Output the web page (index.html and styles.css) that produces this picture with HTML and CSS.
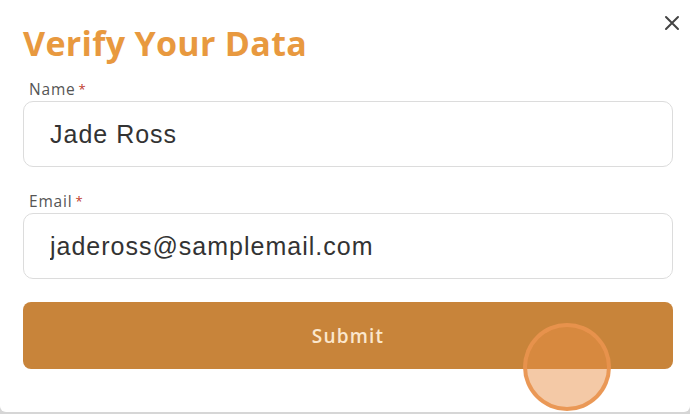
FILE: index.html
```html
<!DOCTYPE html>
<html lang="en">
<head>
  <meta charset="UTF-8" />
  <title>Verify Your Data</title>
  <meta name="viewport" content="width=device-width, initial-scale=1.0" />
  <link rel="stylesheet" href="styles.css">
</head>
<body>
  <div class="modal">
    <div class="modal-header">
      <h1>Verify Your Data</h1>
      <button class="close" aria-label="Close">
        <svg width="16" height="16" viewBox="0 0 16 16">
          <path d="M2 2 L14 14 M14 2 L2 14" stroke="#444" stroke-width="2" stroke-linecap="round" fill="none" />
        </svg>
      </button>
    </div>
    <form class="form">
      <div class="field">
        <label>Name<span class="req">*</span></label>
        <input type="text" value="Jade Ross" />
      </div>
      <div class="field">
        <label>Email<span class="req">*</span></label>
        <input type="text" value="jadeross@samplemail.com" />
      </div>
      <button type="button" class="submit">Submit</button>
    </form>
    <div class="touch"></div>
  </div>
</body>
</html>
```

FILE: styles.css
```css
body {
  margin: 0;
  background: #d6d6d6;
  font-family: 'Open Sans', sans-serif;
}
.modal {
  position: relative;
  box-sizing: border-box;
  width: 690px;
  height: 412px;
  padding: 23px 17px 0 23px;
  background: #fff;
  border-radius: 0 0 6px 6px;
  overflow: hidden;
}
.modal-header {
  display: flex;
  justify-content: space-between;
  align-items: flex-start;
  margin-bottom: 16px;
}
.modal-header h1 {
  margin: 0;
  font-size: 34px;
  line-height: 40px;
  font-weight: 700;
  letter-spacing: 0.3px;
  color: #e8993f;
}
.close {
  border: none;
  background: none;
  padding: 0;
  width: 16px;
  height: 16px;
  margin: -8px -7px 0 0;
  cursor: pointer;
}
.close svg { display: block; }
.form {
  display: flex;
  flex-direction: column;
  gap: 24px;
}
.field label {
  display: block;
  padding-left: 6px;
  margin-bottom: 2px;
  font-size: 15.5px;
  line-height: 20px;
  color: #555;
  letter-spacing: 0.8px;
}
.req {
  margin-left: 3px;
  color: #c0392b;
  font-size: 13px;
  vertical-align: top;
}
.field input {
  box-sizing: border-box;
  width: 100%;
  height: 66px;
  padding: 0 0 0 26px;
  border: 1px solid #dcdcdc;
  border-radius: 10px;
  font-family: 'Liberation Sans', Arial, sans-serif;
  font-size: 25px;
  letter-spacing: 1px;
  color: #333;
  outline: none;
}
.submit {
  height: 67px;
  margin-top: -1px;
  border: none;
  border-radius: 8px;
  background: #c8843a;
  color: #fbe7cd;
  font-family: 'Open Sans', sans-serif;
  font-size: 19px;
  font-weight: 600;
  letter-spacing: 1.2px;
  cursor: pointer;
}
.touch {
  position: absolute;
  left: 523px;
  top: 323px;
  box-sizing: border-box;
  width: 88px;
  height: 88px;
  border-radius: 50%;
  border: 4px solid rgba(233, 148, 78, 0.9);
  background: rgba(233, 142, 69, 0.48);
}
```
